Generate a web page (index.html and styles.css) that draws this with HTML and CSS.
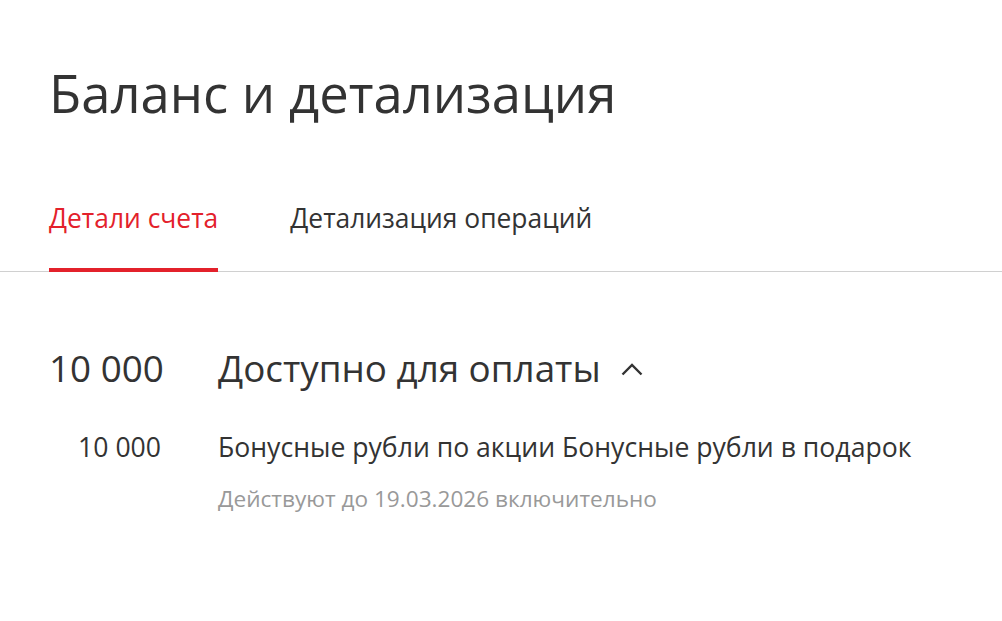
FILE: index.html
```html
<!DOCTYPE html>
<html lang="ru">
<head>
<meta charset="utf-8">
<link rel="stylesheet" href="styles.css">
</head>
<body>
<div class="page">
  <h1 class="title">Баланс и детализация</h1>
  <nav class="tabs">
    <div class="tab active">Детали счета</div>
    <div class="tab">Детализация операций</div>
  </nav>
  <section class="balance">
    <div class="row main">
      <div class="amount">10 000</div>
      <div class="label">Доступно для оплаты
        <svg class="chev" width="22" height="14" viewBox="0 0 22 14"><path d="M1.5 12.5 L11 3 L20.5 12.5" fill="none" stroke="#333" stroke-width="2.4"/></svg>
      </div>
    </div>
    <div class="row sub">
      <div class="amount">10 000</div>
      <div class="info">
        <div class="name">Бонусные рубли по акции Бонусные рубли в подарок</div>
        <div class="note">Действуют до 19.03.2026 включительно</div>
      </div>
    </div>
  </section>
</div>
</body>
</html>
```
FILE: styles.css
```css
html, body { margin: 0; padding: 0; background: #fff; }
body { font-family: "Open Sans", sans-serif; color: #333; }
.page { padding-top: 58px; }
.title { margin: 0 0 0 49px; font-size: 52.6px; font-weight: 400; line-height: 70px; color: #333; }
.tabs { display: flex; gap: 72px; padding: 0 0 0 49px; margin-top: 73px; border-bottom: 1px solid #d0d0d0; }
.tab { font-size: 26.4px; line-height: 34px; padding-bottom: 33px; border-bottom: 4px solid transparent; margin-bottom: -1px; color: #333; white-space: nowrap; }
.tab.active { color: #e3212b; border-bottom-color: #e3212b; }
.balance { padding: 74px 0 0 49px; }
.row { display: flex; gap: 57px; }
.amount { width: 112px; text-align: right; flex: none; white-space: nowrap; }
.main .amount, .main .label { font-size: 36.8px; line-height: 44px; }
.main .amount { text-align: left; }
.label { display: flex; align-items: center; gap: 20px; white-space: nowrap; }
.chev { margin-top: 2px; }
.sub { margin-top: 40px; }
.sub .amount { font-size: 26.6px; line-height: 34px; }
.name { font-size: 26.6px; line-height: 34px; color: #333; white-space: nowrap; }
.note { font-size: 22.6px; line-height: 30px; color: #999; margin-top: 20px; white-space: nowrap; }
```
